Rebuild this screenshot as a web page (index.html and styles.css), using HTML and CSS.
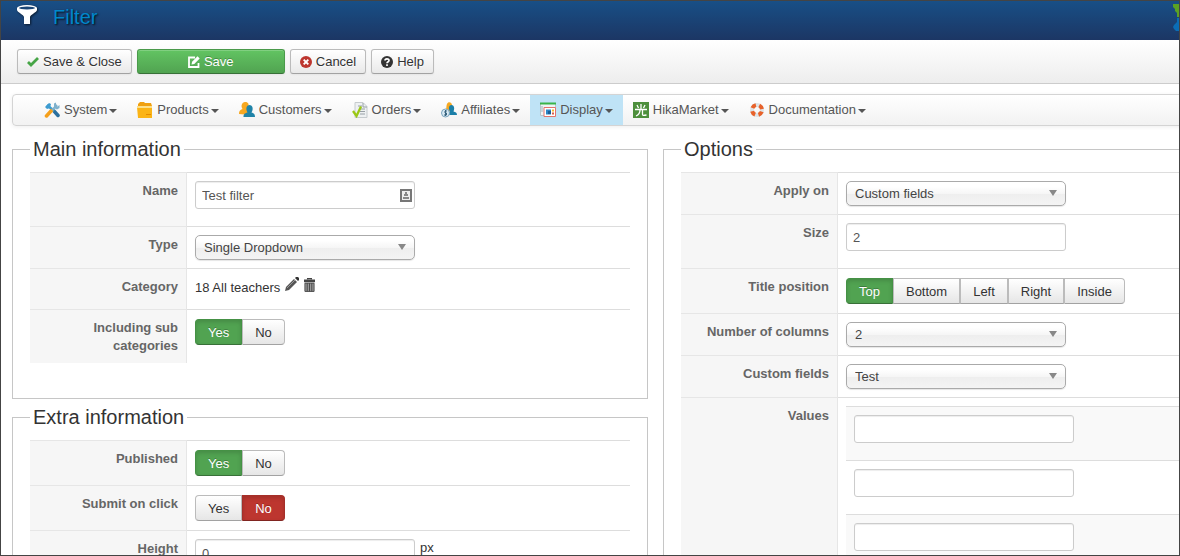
FILE: index.html
```html
<!DOCTYPE html>
<html lang="en">

<head>
  <meta charset="UTF-8">
  <meta name="viewport" content="width=device-width, initial-scale=1.0">
  <title>Filter</title>
  <link rel="stylesheet" href="styles.css">
</head>

<body>
  <div class="window">
    <header class="header">
      <svg class="header-icon" width="22" height="22" viewBox="0 0 22 22">
        <path d="M1 4v2c0 2 7 5 7 7v7h6v-7c0-2 7-5 7-7V4z" fill="#fff" />
        <ellipse cx="11" cy="4" rx="10" ry="3" fill="#fff" />
        <ellipse cx="11" cy="4" rx="8" ry="1.5" fill="#1a4677" />
      </svg>
      <h1><a href="#">Filter</a></h1>
      <svg class="brand" width="6" height="27" viewBox="0 0 6 27">
        <path d="M0 0h6v13H4V9L2 7V5L0 3z" fill="#5ba124" />
        <path d="M6 14H4v4l-3 3-1 2 1 2 2 2h3z" fill="#0b6db5" />
      </svg>
    </header>

    <div class="toolbar">
      <button class="btn" type="button">
        <svg width="12" height="12" viewBox="0 0 12 12"><path d="M1 6l3 3 7-7" fill="none" stroke="#46a546" stroke-width="2.8" /></svg>
        Save &amp; Close
      </button>
      <button class="btn btn-success" type="button">
        <svg width="12" height="12" viewBox="0 0 12 12"><path d="M7 1.500H1v9.500h9.500V7" fill="none" stroke="#fff" stroke-width="1.8" /><path d="M3.500 8.500l.6-2.800L9.500.3l2.200 2.200-5.400 5.400z" fill="#fff" /></svg>
        Save
      </button>
      <button class="btn" type="button">
        <svg width="12" height="12" viewBox="0 0 12 12"><circle cx="6" cy="6" r="6" fill="#bd362f" /><path d="M3.700 3.700l4.600 4.600M8.300 3.700L3.700 8.300" stroke="#fff" stroke-width="1.900" /></svg>
        Cancel
      </button>
      <button class="btn" type="button">
        <svg width="12" height="12" viewBox="0 0 12 12"><circle cx="6" cy="6" r="6" fill="#333" /><path d="M4 4.600C4 2.300 8 2.300 8 4.500 8 5.800 6 5.600 6 7.300M6 8.300v1.600" fill="none" stroke="#fff" stroke-width="1.700" /></svg>
        Help
      </button>
    </div>

    <main class="content">
      <nav class="menu">
        <a href="#">
          <svg width="16" height="16" viewBox="0 0 16 16"><path d="M10 9l4 4.500" stroke="#2a6f9e" stroke-width="3.500" stroke-linecap="round" /><path d="M3 3l7 6" stroke="#3d9bd0" stroke-width="2.500" /><path d="M1 5l4-4 2 1-1 4-3 1z" fill="#3d9bd0" /><path d="M2.500 14l5-5.500" stroke="#f5a01c" stroke-width="3.500" stroke-linecap="round" /><path d="M8 8l5-5" stroke="#7fb1cc" stroke-width="2" /><path d="M10 1.500l2-1v3l1.500 1 2-1.500v3L13 7.500 10 6z" fill="#7fb1cc" /></svg>
          System<span class="caret"></span>
        </a>
        <a href="#">
          <svg width="16" height="16" viewBox="0 0 16 16"><path d="M1 2l2-2h4l1 1h6l1 3H1z" fill="#f0a010" /><path d="M0 5h15v11H1z" fill="#fbb416" /><path d="M0 4h15v2H0z" fill="#fde08a" /><path d="M9 12h5v1H9z" fill="#e58b00" /></svg>
          Products<span class="caret"></span>
        </a>
        <a href="#">
          <svg width="16" height="16" viewBox="0 0 16 16"><path d="M0 12c0-3 1-4 3.500-5C1.500 4 3 0 6 0s4 2 3.500 4v4l2 5z" fill="#f6a821" /><path d="M4.500 15c0-3 1-3.500 4-4.500C6 6 8 3 10.500 3S15 6 12.500 10.500C15 11.500 16 12 16 15z" fill="#1f83a8" /></svg>
          Customers<span class="caret"></span>
        </a>
        <a href="#">
          <svg width="16" height="16" viewBox="0 0 16 16"><path d="M3 .5h8l4 4v11H3z" fill="#eef1f2" stroke="#c6cbce" /><path d="M11 1v4h4M6 4h4M7 7h6M8 9.500h5M8 12h5" fill="none" stroke="#98a0a6" /><path d="M1 9l3.500 5L9 4.500" fill="none" stroke="#9bc816" stroke-width="2.300" /></svg>
          Orders<span class="caret"></span>
        </a>
        <a href="#">
          <svg width="16" height="16" viewBox="0 0 16 16"><path d="M4 9c2-2 1-5 2-7 1-3 5-2 5 1v7z" fill="#f6a821" /><path d="M6 13c0-2 1-3 3-3.500C7 6 8 3 10.500 3S14 6 12.500 9.500c2 .5 3.500 1 3.500 3.500z" fill="#1b7fa8" /><circle cx="4.500" cy="11" r="4" fill="#d9eaf4" stroke="#7ba4be" /><path d="M6 9H4v2h1.500v2H3M4.500 8v6" fill="none" stroke="#39647f" /></svg>
          Affiliates<span class="caret"></span>
        </a>
        <a class="active" href="#">
          <svg width="16" height="16" viewBox="0 0 16 16"><path d="M.5 1.500h15v12H.5z" fill="#eef4f6" stroke="#b6c5cc" /><path d="M0 .5h16v2H0z" fill="#38b44a" /><path d="M1 5h2M1 7h2M1 9h2" stroke="#9fb3bf" /><path d="M4 5.500h11.500v9H4z" fill="#fff" stroke="#e2736b" /><path d="M6 7.500h5v5H6z" fill="#2c86c7" /><path d="M8 9h3v3H8z" fill="#1e5e96" /><path d="M12 7.500h2v2h-2z" fill="#f4b82c" /><path d="M12 10.500h2v2h-2z" fill="#d95c4b" /></svg>
          Display<span class="caret"></span>
        </a>
        <a href="#">
          <svg width="16" height="16" viewBox="0 0 16 16"><path d="M0 0h16v16H0z" fill="#4d8f3c" /><path d="M8 2v5M4 3l1.500 3M12 3l-1.500 3M2 7.500h12M7 8c0 3-1.500 5-4 6M9.500 8v4.500c0 1 1 1 4 .5" fill="none" stroke="#fff" stroke-width="1.300" /></svg>
          HikaMarket<span class="caret"></span>
        </a>
        <a href="#">
          <svg width="16" height="16" viewBox="0 0 16 16"><circle cx="8" cy="8" r="5" fill="none" stroke="#dde3e6" stroke-width="4" /><circle cx="8" cy="8" r="5" fill="none" stroke="#e8622a" stroke-width="4" stroke-dasharray="4.400 3.454" stroke-dashoffset="-1.727" /></svg>
          Documentation<span class="caret"></span>
        </a>
      </nav>

      <form class="columns" autocomplete="off">
        <div>
          <fieldset>
            <legend>Main information</legend>
            <table>
              <tr>
                <th><label for="name">Name</label></th>
                <td><input class="text text-autofill" id="name" type="text" value="Test filter"></td>
              </tr>
              <tr>
                <th><label for="type">Type</label></th>
                <td><select id="type"><option>Single Dropdown</option></select></td>
              </tr>
              <tr>
                <th>Category</th>
                <td>
                  <div class="category">
                    18 All teachers
                    <button class="icon-btn" type="button" aria-label="Edit category">
                      <svg width="14" height="14" viewBox="0 0 14 14"><path d="M0 14l1-4 8-8 3 3-8 8z" fill="#555" /><path d="M10 1l1-1h2l1 1v2l-1 1z" fill="#333" /><path d="M2 11l8-8" stroke="#999" /></svg>
                    </button>
                    <button class="icon-btn" type="button" aria-label="Remove category">
                      <svg width="11" height="16" viewBox="0 0 12 16"><path d="M4 2V1h4v1" fill="none" stroke="#444" stroke-width="1.500" /><path d="M0 2h12v3H0z" fill="#444" /><path d="M1 6h10v9H1z" fill="#999" stroke="#444" /><path d="M3.500 6v9M6 6v9M8.500 6v9" stroke="#444" /></svg>
                    </button>
                  </div>
                </td>
              </tr>
              <tr>
                <th>Including sub categories</th>
                <td>
                  <div class="btn-group">
                    <label class="yes"><input type="radio" name="subcategories" checked>Yes</label>
                    <label class="no"><input type="radio" name="subcategories">No</label>
                  </div>
                </td>
              </tr>
            </table>
          </fieldset>

          <fieldset>
            <legend>Extra information</legend>
            <table>
              <tr>
                <th>Published</th>
                <td>
                  <div class="btn-group">
                    <label class="yes"><input type="radio" name="published" checked>Yes</label>
                    <label class="no"><input type="radio" name="published">No</label>
                  </div>
                </td>
              </tr>
              <tr>
                <th>Submit on click</th>
                <td>
                  <div class="btn-group">
                    <label class="yes"><input type="radio" name="submit_click">Yes</label>
                    <label class="no"><input type="radio" name="submit_click" checked>No</label>
                  </div>
                </td>
              </tr>
              <tr>
                <th><label for="height">Height</label></th>
                <td>
                  <div class="with-unit">
                    <input class="text" id="height" type="text" value="0">
                    <span>px</span>
                  </div>
                </td>
              </tr>
            </table>
          </fieldset>
        </div>

        <div>
          <fieldset>
            <legend>Options</legend>
            <table>
              <tr>
                <th><label for="apply">Apply on</label></th>
                <td><select id="apply"><option>Custom fields</option></select></td>
              </tr>
              <tr>
                <th><label for="size">Size</label></th>
                <td><input class="text" id="size" type="text" value="2"></td>
              </tr>
              <tr>
                <th>Title position</th>
                <td>
                  <div class="btn-group">
                    <label class="yes"><input type="radio" name="position" checked>Top</label>
                    <label class="yes"><input type="radio" name="position">Bottom</label>
                    <label class="yes"><input type="radio" name="position">Left</label>
                    <label class="yes"><input type="radio" name="position">Right</label>
                    <label class="yes"><input type="radio" name="position">Inside</label>
                  </div>
                </td>
              </tr>
              <tr>
                <th><label for="columns">Number of columns</label></th>
                <td><select id="columns"><option>2</option></select></td>
              </tr>
              <tr>
                <th><label for="fields">Custom fields</label></th>
                <td><select id="fields"><option>Test</option></select></td>
              </tr>
              <tr>
                <th>Values</th>
                <td>
                  <table class="values">
                    <tr><td><input class="text" type="text" aria-label="Value 1"></td></tr>
                    <tr><td><input class="text" type="text" aria-label="Value 2"></td></tr>
                    <tr><td><input class="text" type="text" aria-label="Value 3"></td></tr>
                  </table>
                </td>
              </tr>
            </table>
          </fieldset>
        </div>
      </form>
    </main>
  </div>
</body>

</html>
```
FILE: styles.css
```css
* {
  box-sizing: border-box;
}

body {
  margin: 0;
  font: 13px/18px "Liberation Sans", Arial, sans-serif;
  color: #333;
  background: #fff;
}

button,
input,
select {
  font: inherit;
  color: inherit;
}

.window {
  height: 100vh;
  overflow: hidden;
  border: 1px solid #444;
}

.header {
  display: flex;
  align-items: flex-start;
  height: 39px;
  padding: 3px 0 0 15px;
  background: linear-gradient(#184f86, #1c3664);
}

.header-icon {
  filter: drop-shadow(1px 1px 1px rgba(0, 0, 0, .6));
}

.header h1 {
  margin: 0 0 0 15px;
  font-size: 20px;
  font-weight: normal;
  line-height: 27px;
}

.header a {
  color: #08c;
  text-decoration: none;
  text-shadow: 1px 1px 2px rgba(0, 0, 0, .8);
}

.brand {
  margin-left: auto;
}

.toolbar {
  display: flex;
  gap: 5px;
  padding: 9px 16px;
  border-bottom: 1px solid #ccc;
  background: linear-gradient(#fff, #ededed);
}

.btn {
  display: flex;
  align-items: center;
  justify-content: center;
  gap: 4px;
  height: 25px;
  padding: 0 9px;
  border: 1px solid #bbb;
  border-bottom-color: #a2a2a2;
  border-radius: 3px;
  background: linear-gradient(#fff, #e9e9e9);
  text-shadow: 0 1px 1px rgba(255, 255, 255, .75);
  box-shadow: inset 0 1px 0 rgba(255, 255, 255, .2), 0 1px 2px rgba(0, 0, 0, .05);
  cursor: pointer;
}

.btn-success {
  min-width: 148px;
  color: #fff;
  border-color: #4a9a4a #4a9a4a #387038;
  background: linear-gradient(#62c462, #51a351);
  text-shadow: 0 -1px 0 rgba(0, 0, 0, .25);
}

/* the page is wider than the window */
.content {
  margin: 10px -120px 0 11px;
}

.menu {
  display: flex;
  height: 32px;
  padding: 0 21px;
  border: 1px solid #d4d4d4;
  border-radius: 4px;
  background: linear-gradient(#fff, #f2f2f2);
  box-shadow: 0 1px 4px rgba(0, 0, 0, .07);
}

.menu a {
  display: flex;
  align-items: center;
  padding: 0 10px;
  color: #555;
  text-decoration: none;
}

.menu svg {
  margin-right: 4px;
}

.menu .active {
  background: #bfe3f6;
}

.caret {
  margin: 2px 0 0 2px;
  border: 4px solid transparent;
  border-top-color: #555;
  border-bottom: 0;
}

.columns {
  display: grid;
  grid-template-columns: 1fr 1fr;
  gap: 15px;
  margin-top: 13px;
}

fieldset {
  min-width: 0;
  margin: 0 0 8px;
  padding: 12px 17px 35px;
  border: 1px solid #c6c6c6;
}

legend {
  padding: 0 3px;
  font-size: 20px;
  line-height: 21px;
}

table {
  width: 100%;
  border-collapse: separate;
  border-spacing: 0;
}

th,
td {
  padding: 8px;
  border-top: 1px solid #ddd;
  vertical-align: top;
}

th {
  width: 157px;
  padding-top: 9px;
  border-top-color: #e6e6e6;
  border-right: 1px solid #e6e6e6;
  background: #f6f6f6;
  color: #666;
  text-align: right;
}

.text {
  width: 220px;
  height: 28px;
  margin: 0 0 9px;
  padding: 4px 6px;
  border: 1px solid #ccc;
  border-radius: 3px;
  color: #555;
  background: #fff;
  box-shadow: inset 0 1px 1px rgba(0, 0, 0, .075);
}

.text-autofill {
  background: #fff url("data:image/svg+xml,%3Csvg xmlns='http://www.w3.org/2000/svg' width='12' height='13'%3E%3Cpath d='M1 1h10v11H1z' fill='%23eee' stroke='%23777' stroke-width='2'/%3E%3Cpath d='M5 3h2v2h1v2H4V5h1zM3 8h6v2H3z' fill='%23888'/%3E%3C/svg%3E") no-repeat right 2px center;
}

.with-unit {
  display: flex;
  align-items: flex-start;
  gap: 5px;
}

select {
  display: block;
  appearance: none;
  width: 220px;
  height: 25px;
  padding: 1px 8px 0;
  border: 1px solid #aaa;
  border-radius: 5px;
  color: #444;
  background:
    url("data:image/svg+xml,%3Csvg xmlns='http://www.w3.org/2000/svg' width='8' height='6'%3E%3Cpath d='M0 0h8L4 6z' fill='%23888'/%3E%3C/svg%3E") no-repeat right 8px top 8px,
    linear-gradient(#fff 20%, #f6f6f6 50%, #eee 52%, #f4f4f4);
  box-shadow: 0 1px 1px rgba(0, 0, 0, .1);
}

.category {
  display: flex;
  align-items: flex-start;
  gap: 5px;
  height: 24px;
  padding-top: 2px;
}

.icon-btn {
  display: flex;
  padding: 0;
  border: 0;
  background: none;
  cursor: pointer;
}

.icon-btn svg {
  display: block;
  margin-top: -2px;
}

.btn-group {
  display: flex;
  margin: 1px 0;
}

.btn-group label {
  height: 26px;
  padding: 4px 12px 2px;
  border: 1px solid #bbb;
  border-bottom-color: #a2a2a2;
  background: linear-gradient(#fff, #e6e6e6);
  cursor: pointer;
}

.btn-group label:first-child {
  border-radius: 4px 0 0 4px;
}

.btn-group label:last-child {
  border-radius: 0 4px 4px 0;
}

.btn-group input {
  appearance: none;
  position: absolute;
  margin: 0;
}

.btn-group label:has(:checked) {
  color: #fff;
  text-shadow: 0 -1px 0 rgba(0, 0, 0, .25);
  box-shadow: inset 0 2px 4px rgba(0, 0, 0, .15);
}

.btn-group .yes:has(:checked) {
  border-color: #459145 #459145 #387038;
  background: #51a351;
}

.btn-group .no:has(:checked) {
  border-color: #a52f29 #a52f29 #802420;
  background: #bd362f;
}

.values tr:nth-child(odd) {
  background: #f9f9f9;
}
```
